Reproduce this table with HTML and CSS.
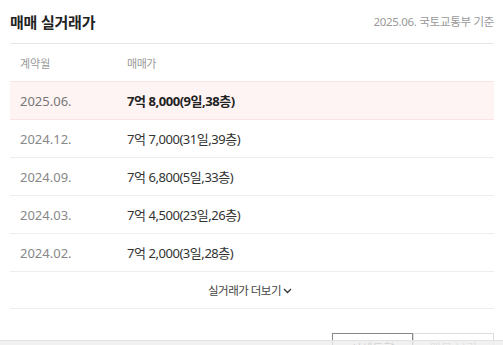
FILE: index.html
```html
<!DOCTYPE html>
<html lang="ko">
<head>
<meta charset="utf-8">
<link rel="stylesheet" href="styles.css">
</head>
<body>
<div class="panel">
  <div class="head">
    <h2 class="title">매매 실거래가</h2>
    <span class="basis">2025.06. 국토교통부 기준</span>
  </div>
  <div class="row thead">
    <span class="c-date">계약월</span>
    <span class="c-price">매매가</span>
  </div>
  <div class="row hl">
    <span class="c-date">2025.06.</span>
    <span class="c-price strong">7억 8,000(9일,38층)</span>
  </div>
  <div class="row">
    <span class="c-date">2024.12.</span>
    <span class="c-price">7억 7,000(31일,39층)</span>
  </div>
  <div class="row">
    <span class="c-date">2024.09.</span>
    <span class="c-price">7억 6,800(5일,33층)</span>
  </div>
  <div class="row">
    <span class="c-date">2024.03.</span>
    <span class="c-price">7억 4,500(23일,26층)</span>
  </div>
  <div class="row">
    <span class="c-date">2024.02.</span>
    <span class="c-price">7억 2,000(3일,28층)</span>
  </div>
  <div class="more">
    <span>실거래가 더보기</span>
    <svg class="chev" width="9" height="6" viewBox="0 0 9 6"><path d="M1 1l3.5 3.5L8 1" fill="none" stroke="#333" stroke-width="1.3"/></svg>
  </div>
  <div class="btns">
    <button class="btn on">시세동향</button>
    <button class="btn">매물 보기</button>
  </div>
</div>
<div class="bottombar"></div>
</body>
</html>
```
FILE: styles.css
```css
html, body {
  margin: 0;
  padding: 0;
  background: #fff;
  font-family: "Noto Sans", "Noto Sans CJK KR", sans-serif;
  overflow: hidden;
}
.panel {
  width: 484px;
  margin-left: 10px;
}
.head {
  height: 44px;
  display: flex;
  align-items: center;
  justify-content: space-between;
  border-bottom: 1px solid #e6e6e6;
  padding-bottom: 1px;
  box-sizing: border-box;
}
.title {
  margin: 0;
  font-size: 15px;
  font-weight: 700;
  color: #222;
  letter-spacing: -0.2px;
}
.basis {
  font-size: 11.5px;
  color: #999;
  letter-spacing: -0.3px;
}
.row {
  height: 38px;
  display: flex;
  align-items: center;
  border-bottom: 1px solid #eee;
  box-sizing: border-box;
  font-size: 13px;
}
.row.thead {
  height: 37px;
  border-bottom: none;
  font-size: 11px;
  color: #999;
}
.row.hl {
  height: 39px;
  background: #fff4f4;
  border-top: 1px solid #fde3e3;
  border-bottom: 1px solid #fde3e3;
}
.c-date {
  width: 107px;
  padding-left: 10px;
  color: #888;
}
.thead .c-date, .thead .c-price { color: #999; }
.c-price {
  color: #333;
  letter-spacing: -0.45px;
}
.strong { font-weight: 700; color: #222; }
.hl .c-date { color: #777; }
.more {
  height: 37px;
  display: flex;
  align-items: center;
  justify-content: center;
  gap: 2px;
  border-bottom: 1px solid #eee;
  box-sizing: border-box;
  font-size: 11.5px;
  letter-spacing: -0.5px;
  color: #444;
  padding-right: 4px;
}
.chev { margin-top: 1px; }
.btns {
  display: flex;
  justify-content: flex-end;
  margin-top: 24px;
}
.btn {
  width: 81px;
  height: 32px;
  background: #fff;
  font-family: inherit;
  font-size: 12px;
  padding: 5px 0 0;
  display: flex;
  justify-content: center;
  align-items: flex-start;
  border: 1px solid #ddd;
  color: #aaa;
}
.btn.on {
  border-color: #888;
  color: #666;
}
.bottombar {
  position: fixed;
  left: 0;
  right: 0;
  bottom: 0;
  height: 4px;
  background: rgba(238, 238, 238, 0.8);
  border-top: 1px solid #e2e2e2;
}
```
